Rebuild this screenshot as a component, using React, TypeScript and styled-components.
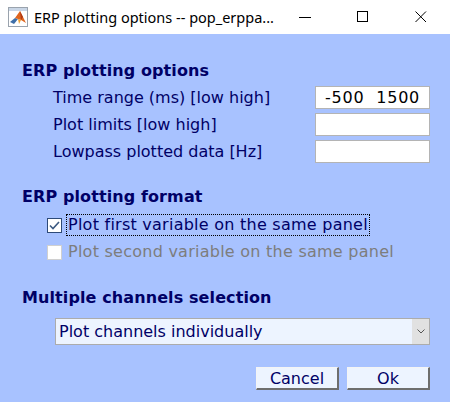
import React from "react";
import styled, { createGlobalStyle } from "styled-components";

const Global = createGlobalStyle`
  html, body { margin: 0; padding: 0; background: #A8C2FF; }
  body { width: 450px; height: 402px; overflow: hidden; }
  * { box-sizing: border-box; }
`;

const Window = styled.div`
  width: 450px;
  height: 402px;
  display: flex;
  flex-direction: column;
  background: #a8c2ff;
`;

const TitleBar = styled.div`
  height: 34px;
  background: #ffffff;
  display: flex;
  align-items: center;
  padding-left: 8px;
`;

const TitleText = styled.span`
  font-family: "Noto Sans", "Open Sans", sans-serif;
  font-size: 14.5px;
  color: #000000;
  margin-left: 6px;
  flex: 1;
  white-space: nowrap;
`;

const Controls = styled.div`
  display: flex;
  height: 34px;
`;

const CtrlBtn = styled.div`
  width: 58px;
  height: 34px;
  display: flex;
  align-items: center;
  justify-content: center;
`;

const Body = styled.div`
  display: flex;
  flex-direction: column;
  padding: 26px 20px 0 22px;
`;

const Heading = styled.div<{ $top: number }>`
  margin-top: ${(p) => p.$top}px;
  height: 22px;
  line-height: 22px;
  font-family: "DejaVu Sans", sans-serif;
  font-weight: bold;
  font-size: 16px;
  letter-spacing: 0.1px;
  color: #000066;
  white-space: nowrap;
`;

const FieldRow = styled.div<{ $top: number }>`
  margin-top: ${(p) => p.$top}px;
  height: 23px;
  display: flex;
  align-items: center;
  justify-content: space-between;
  padding-left: 31px;
`;

const Label = styled.span`
  font-family: "DejaVu Sans", sans-serif;
  font-size: 16px;
  color: #000066;
  white-space: nowrap;
`;

const TextBox = styled.div`
  width: 115px;
  height: 23px;
  background: #ffffff;
  border: 1px solid #b4b4b4;
  display: flex;
  align-items: center;
  justify-content: center;
  font-family: "DejaVu Sans", sans-serif;
  font-size: 16px;
  letter-spacing: 0.8px;
  color: #000000;
  white-space: pre;
`;

const CheckRow = styled.div<{ $top: number }>`
  margin-top: ${(p) => p.$top}px;
  height: 22px;
  display: flex;
  align-items: center;
  padding-left: 25px;
`;

const Box = styled.div<{ $disabled?: boolean }>`
  width: 15px;
  height: 15px;
  background: #ffffff;
  border: 1px solid ${(p) => (p.$disabled ? "#d0d0d0" : "#2e4a78")};
  display: flex;
  align-items: center;
  justify-content: center;
`;

const CheckLabel = styled.span<{ $disabled?: boolean; $focused?: boolean }>`
  margin-left: 4px;
  height: 22px;
  line-height: 20px;
  padding: 0 1px;
  border: 1px ${(p) => (p.$focused ? "dotted #000000" : "solid transparent")};
  font-family: "DejaVu Sans", sans-serif;
  font-size: 16px;
  letter-spacing: 0.25px;
  color: ${(p) => (p.$disabled ? "#7d7d7d" : "#000066")};
  white-space: nowrap;
`;

const Select = styled.div`
  margin-top: 9px;
  margin-left: 33px;
  height: 27px;
  display: flex;
  border: 1px solid #acacac;
  background: #edf4ff;
`;

const SelectText = styled.span`
  flex: 1;
  padding-left: 3px;
  line-height: 25px;
  font-family: "DejaVu Sans", sans-serif;
  font-size: 16px;
  color: #000066;
  white-space: nowrap;
`;

const SelectArrow = styled.div`
  width: 17px;
  background: #e1e1e1;
  display: flex;
  align-items: center;
  justify-content: center;
`;

const ButtonRow = styled.div`
  margin-top: 22px;
  display: flex;
  justify-content: flex-end;
  gap: 8px;
`;

const Button = styled.div`
  width: 83px;
  height: 23px;
  background: #edf4ff;
  border-top: 1px solid #f4f4f4;
  border-left: 1px solid #f4f4f4;
  border-right: 2px solid #6e6e6e;
  border-bottom: 2px solid #6e6e6e;
  display: flex;
  align-items: center;
  justify-content: center;
  font-family: "DejaVu Sans", sans-serif;
  font-size: 16px;
  color: #000066;
`;

const AppIcon = () => (
  <svg width="20" height="20" viewBox="0 0 20 20">
    <rect x="0.5" y="0.5" width="19" height="19" fill="#ffffff" stroke="#9aa3ad" />
    <rect x="1" y="1" width="18" height="3" fill="#c9d6e6" />
    <path d="M2 15 L7 11 L10 12 L6 17 Z" fill="#3f6fa8" />
    <path d="M7 11 L12 4 L15 10 L18 16 L13 13 L10 12 Z" fill="#e0651e" />
    <path d="M12 4 L15 10 L13 13 Z" fill="#b23a13" />
    <path d="M10 12 L13 13 L11 17 Z" fill="#f0a030" />
  </svg>
);

export default function App() {
  return (
    <>
      <Global />
      <Window>
        <TitleBar>
          <AppIcon />
          <TitleText>ERP plotting options -- pop_erppa...</TitleText>
          <Controls>
            <CtrlBtn>
              <svg width="12" height="12" viewBox="0 0 12 12">
                <line x1="0" y1="6.5" x2="12" y2="6.5" stroke="#000" strokeWidth="1" />
              </svg>
            </CtrlBtn>
            <CtrlBtn>
              <svg width="12" height="12" viewBox="0 0 12 12">
                <rect x="0.5" y="0.5" width="10" height="10" fill="none" stroke="#000" strokeWidth="1" />
              </svg>
            </CtrlBtn>
            <CtrlBtn>
              <svg width="12" height="12" viewBox="0 0 12 12">
                <path d="M0.5 0.5 L11 11 M11 0.5 L0.5 11" stroke="#000" strokeWidth="1" />
              </svg>
            </CtrlBtn>
          </Controls>
        </TitleBar>
        <Body>
          <Heading $top={0}>ERP plotting options</Heading>
          <FieldRow $top={4}>
            <Label>Time range (ms) [low high]</Label>
            <TextBox>-500  1500</TextBox>
          </FieldRow>
          <FieldRow $top={4}>
            <Label>Plot limits [low high]</Label>
            <TextBox />
          </FieldRow>
          <FieldRow $top={4}>
            <Label>Lowpass plotted data [Hz]</Label>
            <TextBox />
          </FieldRow>
          <Heading $top={23}>ERP plotting format</Heading>
          <CheckRow $top={6}>
            <Box>
              <svg width="11" height="9" viewBox="0 0 11 9">
                <path d="M1 4.5 L4 7.5 L10 1" fill="none" stroke="#3c5a82" strokeWidth="1.6" />
              </svg>
            </Box>
            <CheckLabel $focused>Plot first variable on the same panel</CheckLabel>
          </CheckRow>
          <CheckRow $top={5}>
            <Box $disabled />
            <CheckLabel $disabled>Plot second variable on the same panel</CheckLabel>
          </CheckRow>
          <Heading $top={24}>Multiple channels selection</Heading>
          <Select>
            <SelectText>Plot channels individually</SelectText>
            <SelectArrow>
              <svg width="8" height="5" viewBox="0 0 8 5">
                <path d="M0.5 0.5 L4 4 L7.5 0.5" fill="none" stroke="#555" strokeWidth="1" />
              </svg>
            </SelectArrow>
          </Select>
          <ButtonRow>
            <Button>Cancel</Button>
            <Button>Ok</Button>
          </ButtonRow>
        </Body>
      </Window>
    </>
  );
}
